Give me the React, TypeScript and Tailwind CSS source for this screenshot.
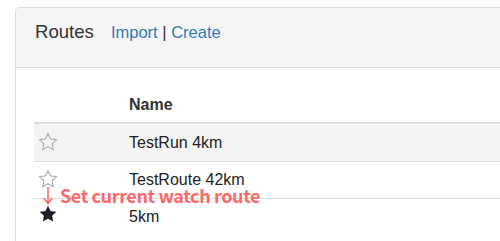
import React from "react";

const STAR = "12,2 15.09,8.26 22,9.27 17,14.14 18.18,21.02 12,17.77 5.82,21.02 7,14.14 2,9.27 8.91,8.26";

function Star({ filled }: { filled?: boolean }) {
  return (
    <svg width="20" height="20" viewBox="0 0 24 24" className="block">
      {filled ? (
        <polygon points={STAR} fill="#1e1e28" />
      ) : (
        <polygon points={STAR} fill="none" stroke="#b3b3b3" strokeWidth="1.5" strokeLinejoin="miter" />
      )}
    </svg>
  );
}

const rows = [
  { name: "TestRun 4km", filled: false, striped: true },
  { name: "TestRoute 42km", filled: false, striped: false },
  { name: "5km", filled: true, striped: false },
];

export default function App() {
  return (
    <div
      className="relative w-[500px] h-[241px] overflow-hidden bg-white text-[#333]"
      style={{ fontFamily: '"Liberation Sans", Arial, sans-serif' }}
    >
      <div className="ml-[15px] mt-[7px] w-[530px] h-[260px] border border-[#dddddd] rounded-[4px] bg-white">
        <div className="h-[60px] border-b border-[#dddddd] bg-[#f5f5f5] rounded-t-[4px] pl-[19px] pt-[13px] flex items-baseline">
          <span className="text-[18.6px] leading-[22px] text-[#333]">Routes</span>
          <span className="ml-[17px] text-[16.5px] leading-[22px]">
            <a className="text-[#337ab7]">Import</a>
            <span className="text-[#333]"> | </span>
            <a className="text-[#337ab7]">Create</a>
          </span>
        </div>
        <div className="pl-[18px] pt-[10px]">
          <div className="flex h-[37px] items-end pb-[7px] border-b-2 border-[#dddddd] box-content">
            <div className="w-[95px]" />
            <div className="text-[16px] leading-[20px] font-bold text-[#333]">Name</div>
          </div>
          {rows.map((r, i) => (
            <div
              key={r.name}
              className={
                "flex h-[37px] items-center " +
                (i > 0 ? "border-t border-[#dddddd] " : "") +
                (r.striped ? "bg-[#f4f4f4]" : "bg-white")
              }
            >
              <div className={"w-[95px] pl-[4px] " + (r.filled ? "-mt-[6px]" : "-mt-[2px]")}>
                <Star filled={r.filled} />
              </div>
              <div className="text-[16px] leading-[20px] text-[#222]">{r.name}</div>
            </div>
          ))}
        </div>
      </div>
      <div className="absolute left-[42px] top-[184px] flex items-center">
        <svg width="12" height="20" viewBox="0 0 12 20" className="block">
          <path d="M6 2 V18 M1.5 13 L6 18.5 L10.5 13" fill="none" stroke="#ff6b6b" strokeWidth="1.6" />
        </svg>
        <span
          className="ml-[6px] text-[18px] leading-[22px] font-bold tracking-[-0.4px] text-[#ff6868]"
          style={{ fontFamily: '"Noto Sans CJK JP", "Noto Sans", sans-serif' }}
        >
          Set current watch route
        </span>
      </div>
    </div>
  );
}
